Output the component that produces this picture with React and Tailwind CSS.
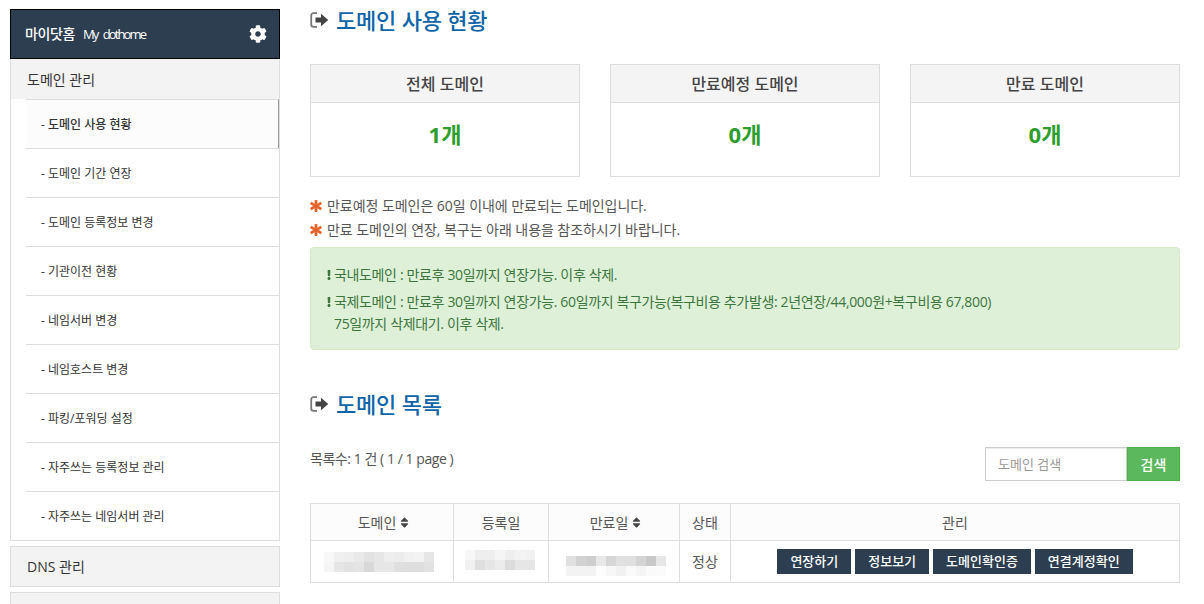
import { FaCog, FaAsterisk, FaExclamation, FaSort } from 'react-icons/fa';

const menuItems = [
  '도메인 사용 현황',
  '도메인 기간 연장',
  '도메인 등록정보 변경',
  '기관이전 현황',
  '네임서버 변경',
  '네임호스트 변경',
  '파킹/포워딩 설정',
  '자주쓰는 등록정보 관리',
  '자주쓰는 네임서버 관리',
];

const stats = [
  { title: '전체 도메인', value: '1개' },
  { title: '만료예정 도메인', value: '0개' },
  { title: '만료 도메인', value: '0개' },
];

const actions = ['연장하기', '정보보기', '도메인확인증', '연결계정확인'];

const blurDomain = [
  ['#f8f8f8', '#f0f0f0', '#eeeeee', '#e9e9e9', '#e2e2e2', '#e6e6e6', '#eeeeee', '#ececec', '#f1f1f1', '#f3f3f3', '#e6e6e6'],
  ['#f5f5f5', '#e6e6e6', '#e2e2e2', '#e4e4e4', '#d8d8d8', '#e6e6e6', '#e6e6e6', '#dfdfdf', '#dedede', '#dedede', '#e2e2e2'],
];
const blurReg = [
  ['#f7f7f7', '#eeeeee', '#eeeeee', '#f5f5f5', '#eeeeee', '#f3f3f3', '#f1f1f1'],
  ['#f1f1f1', '#dfdfdf', '#e6e6e6', '#ececec', '#dcdcdc', '#e6e6e6', '#e6e6e6'],
];
const blurExp = [
  ['#e0e0e0', '#d2d2d2', '#cecece', '#e8e8e8', '#d6d6d6', '#e0e0e0', '#e0e0e0', '#d4d4d4', '#c8c8c8', '#e6e6e6'],
  ['#f3f3f3', '#f3f3f3', '#f3f3f3', '#fcfcfc', '#f7f7f7', '#f1f1f1', '#fafafa', '#f5f5f5', '#fafafa', '#fbfbfb'],
];

// bracket is lighter than the arrow in the picture
const SignOutIcon = () => (
  <svg width="19" height="16" viewBox="0 0 19 16" className="shrink-0">
    <path d="M7 1.2H3.5A2.3 2.3 0 0 0 1.2 3.5v9a2.3 2.3 0 0 0 2.3 2.3H7" fill="none" stroke="#777777" strokeWidth="1.8" />
    <path d="M5.5 5.5H11V1.8L18.2 8 11 14.2V10.5H5.5z" fill="#444444" />
  </svg>
);

const SectionTitle = ({ children, className }) => (
  <h2 className={`flex items-center gap-[7px] text-[22px] leading-[30px] font-medium tracking-[-0.2px] text-[#0f65a8] ${className}`}>
    <SignOutIcon />
    {children}
  </h2>
);

const Blur = ({ rows, className }) => (
  <div className="flex justify-center">
    <div className={`inline-flex flex-col ${className}`}>
      {rows.map((row, i) => (
        <div key={i} className="flex">
          {row.map((color, j) => (
            <div key={j} className="w-[10px] h-[10px]" style={{ background: color }} />
          ))}
        </div>
      ))}
    </div>
  </div>
);

const SortHead = ({ children }) => (
  <span className="inline-flex items-center gap-[2px] pl-[5px]">
    {children}
    <FaSort className="text-[#444444]" size={13} />
  </span>
);

const App = () => {
  return (
    <div className="flex w-[1204px] h-[604px] overflow-hidden bg-white text-[#555555] font-['Open_Sans','Noto_Sans_CJK_KR',sans-serif]">
      <aside className="w-[270px] ml-[10px] mt-[9px] shrink-0">
        <div className="h-[50px] flex items-center justify-between pl-[14px] pr-[12px] bg-[#2c3e50] border border-black text-white">
          <div className="flex items-baseline gap-[8px]">
            <span className="text-[14px] font-medium tracking-[-0.4px]">마이닷홈</span>
            <span className="text-[13px] tracking-[-1.9px] [word-spacing:4px]">My dothome</span>
          </div>
          <FaCog size={18} />
        </div>
        <div className="border-x border-b border-[#dddddd] h-[482px]">
          <div className="h-[40px] flex items-center pl-[16px] bg-[#f3f3f3] text-[14px] text-[#333333]">도메인 관리</div>
          <ul className="ml-[15px]">
            {menuItems.map((item, i) => (
              <li
                key={item}
                className={`h-[49px] flex items-center pl-[15px] pt-[2px] text-[12px] text-[#333333] border-t border-[#dddddd] ${i === 0 ? 'bg-[#fcfcfc] border-r border-r-[#999999] font-medium' : ''}`}
              >
                - {item}
              </li>
            ))}
          </ul>
        </div>
        <div className="mt-[5px] h-[41px] flex items-center pl-[16px] bg-[#f3f3f3] border border-[#dddddd] text-[14px] text-[#333333]">DNS 관리</div>
        <div className="mt-[5px] h-[41px] bg-[#f3f3f3] border border-[#dddddd]" />
      </aside>

      <main className="w-[870px] ml-[30px] shrink-0">
        <SectionTitle className="mt-[5px]">도메인 사용 현황</SectionTitle>

        <div className="mt-[29px] grid grid-cols-3 gap-[30px]">
          {stats.map((stat) => (
            <div key={stat.title} className="h-[113px] border border-[#dddddd]">
              <div className="h-[38px] flex items-center justify-center bg-[#f4f4f4] border-b border-[#dddddd] text-[16px] font-medium text-[#444444]">
                {stat.title}
              </div>
              <div className="pt-[16px] text-center text-[22px] leading-[30px] font-bold text-[#2d9e2d]">{stat.value}</div>
            </div>
          ))}
        </div>

        <div className="mt-[17px] text-[14px] leading-[24px] tracking-[-0.05px]">
          <p className="flex items-center gap-[5px]"><FaAsterisk className="text-[#e1622b]" size={12} stroke="currentColor" strokeWidth={36} />만료예정 도메인은 60일 이내에 만료되는 도메인입니다.</p>
          <p className="flex items-center gap-[5px]"><FaAsterisk className="text-[#e1622b]" size={12} stroke="currentColor" strokeWidth={36} />만료 도메인의 연장, 복구는 아래 내용을 참조하시기 바랍니다.</p>
        </div>

        <div className="mt-[5px] h-[103px] pt-[16px] pl-[13px] bg-[#dff0d8] border border-[#d6e9c6] rounded text-[14px] leading-[22px] tracking-[-0.35px] text-[#3c763d]">
          <p className="flex items-center"><FaExclamation size={10} />국내도메인 : 만료후 30일까지 연장가능. 이후 삭제.</p>
          <p className="flex items-center mt-[5px]"><FaExclamation size={10} />국제도메인 : 만료후 30일까지 연장가능. 60일까지 복구가능(복구비용 추가발생: 2년연장/44,000원+복구비용 67,800)</p>
          <p className="pl-[10px]">75일까지 삭제대기. 이후 삭제.</p>
        </div>

        <SectionTitle className="mt-[39px]">도메인 목록</SectionTitle>

        <div className="mt-[28px] flex justify-between items-start">
          <p className="mt-[2px] text-[14px] leading-[20px] tracking-[-0.45px]">목록수: 1 건 ( 1 / 1 page )</p>
          <div className="flex">
            <input
              placeholder="도메인 검색"
              className="w-[142px] h-[34px] px-[12px] bg-white border border-[#cccccc] text-[13px] outline-none shadow-[inset_0_1px_1px_rgba(0,0,0,0.075)] placeholder:text-[#999999]"
            />
            <button className="w-[53px] h-[34px] bg-[#5cb85c] border border-[#4cae4c] text-white text-[14px] font-medium">검색</button>
          </div>
        </div>

        <table className="mt-[22px] w-full border-collapse table-fixed text-[14px] text-center">
          <thead>
            <tr className="h-[37px] bg-[#fcfcfc]">
              <th className="w-[143px] border border-[#dddddd] font-normal"><SortHead>도메인</SortHead></th>
              <th className="w-[95px] border border-[#dddddd] font-normal">등록일</th>
              <th className="w-[131px] border border-[#dddddd] font-normal"><SortHead>만료일</SortHead></th>
              <th className="w-[51px] border border-[#dddddd] font-normal">상태</th>
              <th className="border border-[#dddddd] font-normal">관리</th>
            </tr>
          </thead>
          <tbody>
            <tr className="h-[42px]">
              <td className="border border-[#dddddd]"><Blur rows={blurDomain} className="mr-[6px]" /></td>
              <td className="border border-[#dddddd]"><Blur rows={blurReg} className="mr-[2px] mb-[4px]" /></td>
              <td className="border border-[#dddddd]"><Blur rows={blurExp} className="ml-[4px] mt-[8px]" /></td>
              <td className="border border-[#dddddd]">정상</td>
              <td className="border border-[#dddddd]">
                <div className="flex justify-center gap-[4px]">
                  {actions.map((label) => (
                    <button key={label} className="h-[25px] px-[13px] bg-[#2c3e50] text-white text-[13px] font-medium">{label}</button>
                  ))}
                </div>
              </td>
            </tr>
          </tbody>
        </table>
      </main>
    </div>
  );
};

export default App;
